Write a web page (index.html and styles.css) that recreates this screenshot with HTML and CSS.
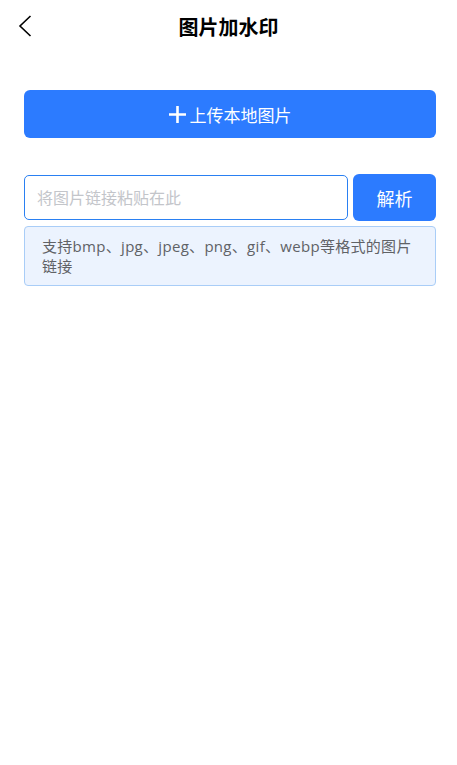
FILE: index.html
```html
<!DOCTYPE html>
<html lang="zh">
<head>
<meta charset="utf-8">
<title>图片加水印</title>
<link rel="stylesheet" href="styles.css">
</head>
<body>
<header class="topbar">
  <a class="back" aria-label="返回">
    <svg width="14" height="22" viewBox="0 0 14 22"><path d="M12.5 1 L2 11 L12.5 21" fill="none" stroke="#000" stroke-width="1.6"/></svg>
  </a>
  <h1 class="title">图片加水印</h1>
</header>
<main class="content">
  <button class="upload">
    <svg class="plus" width="17" height="17" viewBox="0 0 17 17"><path d="M8.5 0 V17 M0 8.5 H17" stroke="#fff" stroke-width="2.6"/></svg>
    <span>上传本地图片</span>
  </button>
  <div class="url-row">
    <input class="url-input" type="text" placeholder="将图片链接粘贴在此">
    <button class="parse">解析</button>
  </div>
  <div class="tip">支持bmp、jpg、jpeg、png、gif、webp等格式的图片链接</div>
</main>
</body>
</html>
```
FILE: styles.css
```css
html, body {
  margin: 0;
  padding: 0;
  background: #fff;
  font-family: "Open Sans", "Noto Sans CJK SC", sans-serif;
}
.topbar {
  position: relative;
  height: 56px;
  display: flex;
  align-items: center;
  justify-content: center;
}
.back {
  position: absolute;
  left: 18px;
  top: 15px;
  width: 14px;
  height: 22px;
  display: block;
}
.back svg { display: block; }
.title {
  margin: 0;
  font-size: 20px;
  font-weight: 700;
  color: #000;
  line-height: 24px;
}
.content {
  padding: 0 21px 0 24px;
}
.upload {
  margin-top: 34px;
  width: 100%;
  height: 48px;
  border: none;
  border-radius: 6px;
  background: #2c7bff;
  color: #fff;
  font-family: inherit;
  font-size: 17px;
  display: flex;
  align-items: center;
  justify-content: center;
  gap: 4px;
  padding: 0;
}
.upload .plus { display: block; }
.url-row {
  margin-top: 36px;
  display: flex;
  align-items: center;
  gap: 5px;
}
.url-input {
  flex: 1;
  min-width: 0;
  box-sizing: border-box;
  height: 45px;
  border: 1px solid #2a80f2;
  border-radius: 5px;
  padding: 0 12px;
  font-family: inherit;
  font-size: 16px;
  outline: none;
  color: #333;
}
.url-input::placeholder {
  color: #c3c5ca;
}
.parse {
  width: 83px;
  height: 47px;
  border: none;
  border-radius: 6px;
  background: #2c7bff;
  color: #fff;
  font-family: inherit;
  font-size: 18px;
  padding: 0;
}
.tip {
  margin-top: 5px;
  box-sizing: border-box;
  border: 1px solid #a9cdf7;
  border-radius: 4px;
  background: #ecf3fe;
  color: #606266;
  font-size: 15px;
  line-height: 20px;
  letter-spacing: 0.3px;
  padding: 9px 20px 9px 17px;
}
```
